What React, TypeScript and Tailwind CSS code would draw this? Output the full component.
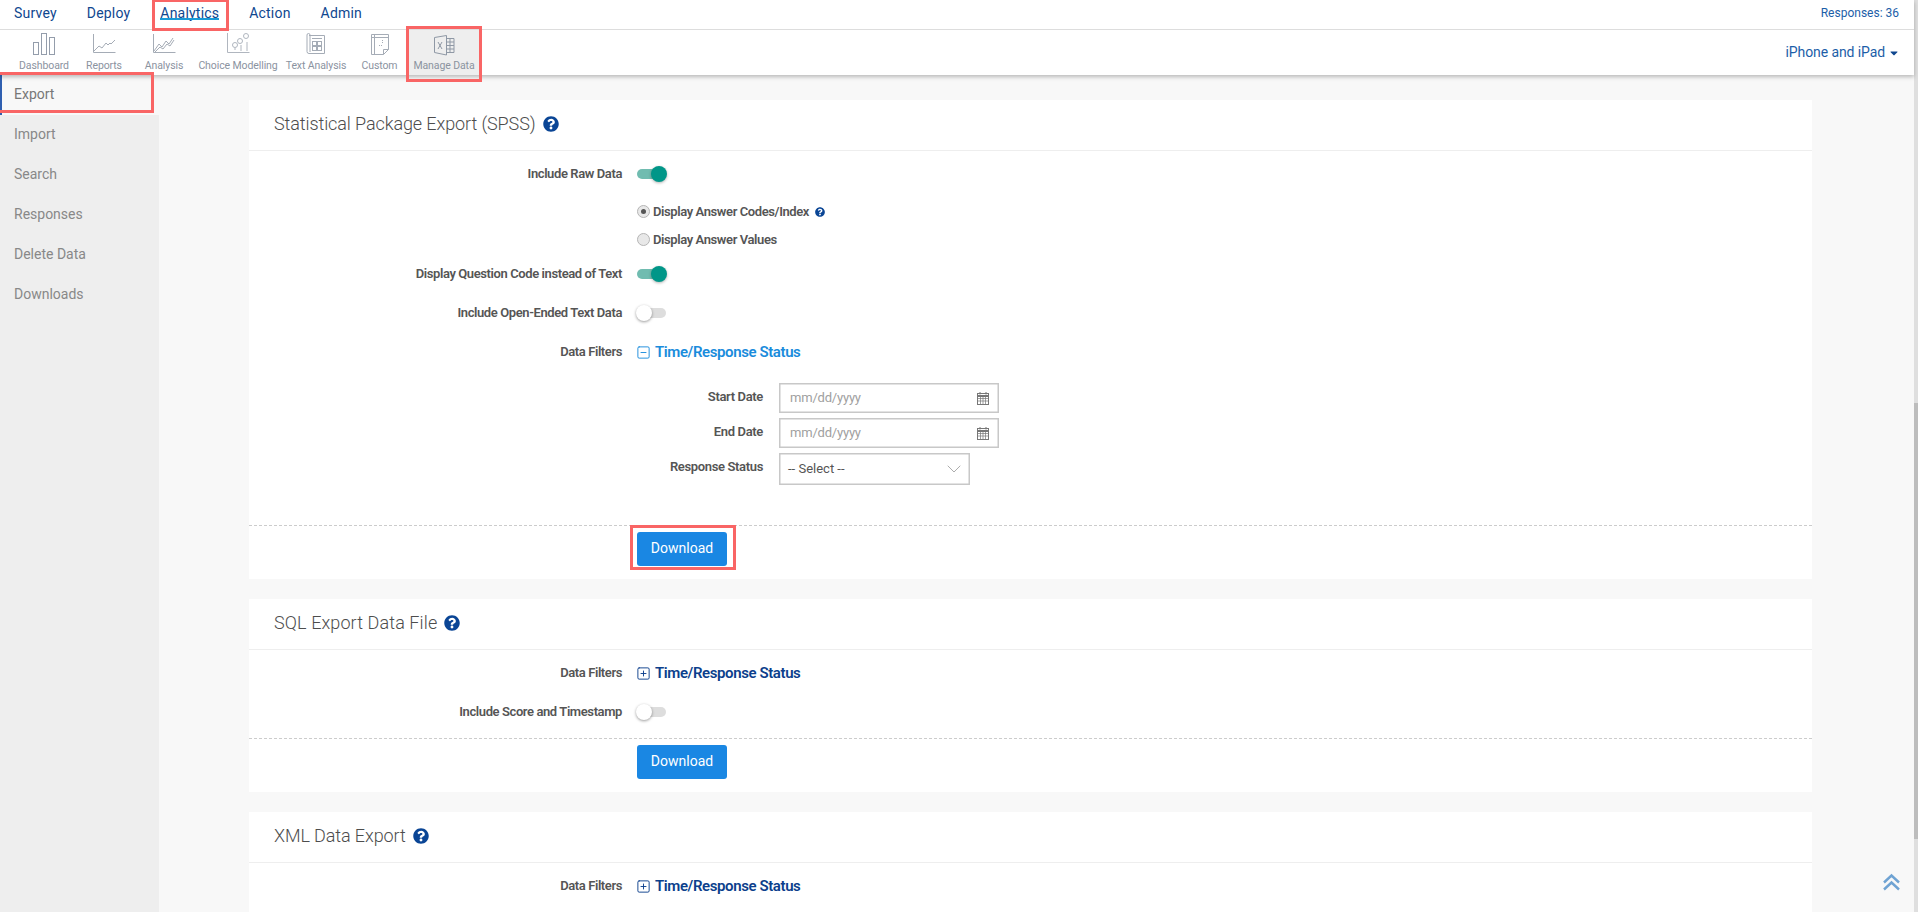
import { useState } from "react";
import { ChevronDown, SquareMinus, SquarePlus } from "lucide-react";
import { FaQuestionCircle, FaCaretDown } from "react-icons/fa";

const font = { fontFamily: '"Roboto", "Liberation Sans", sans-serif' };

const topMenu = ["Survey", "Deploy", "Analytics", "Action", "Admin"];
const sideMenu = ["Import", "Search", "Responses", "Delete Data", "Downloads"];

function IconDashboard() {
  return (
    <svg width="24" height="23" viewBox="0 0 24 23" fill="none" stroke="#949dab" strokeWidth="1">
      <rect x="1.5" y="9.5" width="5" height="12" />
      <rect x="9.5" y="0.5" width="5" height="21" />
      <rect x="17.5" y="4.5" width="5" height="17" />
    </svg>
  );
}

function IconReports() {
  return (
    <svg width="24" height="23" viewBox="0 0 24 23" fill="none" stroke="#a5acb6" strokeWidth="1">
      <path d="M1.5 1v18.5h22" />
      <path d="M2 18l5-5 3 2 4-5 2 2 2-2 1 1 4-4" />
    </svg>
  );
}

function IconAnalysis() {
  return (
    <svg width="24" height="23" viewBox="0 0 24 23" fill="none" stroke="#a5acb6" strokeWidth="1">
      <path d="M1.5 1v18.5h22" />
      <path d="M2 18l5-7 3 3 4-6 3 3 4-6" />
      <path d="M3 19l5-5 3 2 4-5 3 2 4-6" />
    </svg>
  );
}

function IconChoice() {
  return (
    <svg width="24" height="23" viewBox="0 0 24 23" fill="none" stroke="#b0b6bf" strokeWidth="1">
      <path d="M1.5 0v19.5h22" />
      <circle cx="9" cy="12" r="2.5" />
      <circle cx="14" cy="8" r="2.5" />
      <circle cx="20" cy="3" r="2.5" />
      <path d="M9 15v2M15 12v6M21 9v9" />
    </svg>
  );
}

function IconText() {
  return (
    <svg width="20" height="23" viewBox="0 0 20 23" fill="none" stroke="#a5acb6" strokeWidth="1">
      <path d="M3 2.5h15.5v18H3a2 2 0 0 1-2-2V2a1.5 1.5 0 0 1 3 0v17" />
      <rect x="6.5" y="8.5" width="4" height="4" />
      <rect x="11.5" y="8.5" width="4" height="4" />
      <rect x="6.5" y="13.5" width="4" height="4" />
      <rect x="11.5" y="13.5" width="4" height="4" />
      <path d="M6 5.5h10" />
    </svg>
  );
}

function IconCustom() {
  return (
    <svg width="20" height="23" viewBox="0 0 20 23" fill="none" stroke="#a5acb6" strokeWidth="1">
      <path d="M1.5 1.5h17v15l-5 5h-12z" />
      <path d="M13.5 21.5v-5h5" />
      <path d="M1.5 4.5h17M4.5 1.5v20" />
      <path d="M9 12.5h3M12.5 7v4" strokeDasharray="1 1" />
    </svg>
  );
}

function IconManage() {
  return (
    <svg width="22" height="22" viewBox="0 0 22 22" fill="none" stroke="#8f98a5" strokeWidth="1">
      <path d="M13.5 1.5l-12 2v15l12 2.5z" />
      <path d="M13.5 4.5h7.5v14h-7.5M13.5 8h7.5M13.5 11.5h7.5M13.5 15h7.5M17 4.5v14" />
      <path d="M5 8l4 7M9 8l-4 7" />
    </svg>
  );
}

function IconCalendar() {
  return (
    <svg width="12" height="13" viewBox="0 0 12 13" fill="none" stroke="#777777" strokeWidth="1">
      <rect x="0.5" y="1.5" width="11" height="11" />
      <path d="M0.5 4h11" strokeWidth="2" />
      <path d="M0.5 6.5h11M0.5 9h11M3.5 4v8M6 4v8M8.5 4v8" strokeWidth="0.7" />
      <path d="M3 0v2.5M9 0v2.5" />
    </svg>
  );
}

const subMenu = [
  { label: "Dashboard", icon: <IconDashboard />, w: "w-[60px]" },
  { label: "Reports", icon: <IconReports />, w: "w-[60px]" },
  { label: "Analysis", icon: <IconAnalysis />, w: "w-[60px]" },
  { label: "Choice Modelling", icon: <IconChoice />, w: "w-[88px]" },
  { label: "Text Analysis", icon: <IconText />, w: "w-[68px]" },
  { label: "Custom", icon: <IconCustom />, w: "w-[59px]" },
  { label: "Manage Data", icon: <IconManage />, w: "w-[70px]", active: true },
];

function Help({ size = 16 }: { size?: number }) {
  return <FaQuestionCircle size={size} className="text-[#0a4595] shrink-0" />;
}

function Toggle({ on }: { on?: boolean }) {
  return (
    <div className="relative w-[30px] h-[16px] flex items-center">
      <div className={`w-[29px] h-[10px] rounded-full ${on ? "bg-[#70bcb0]" : "bg-[#dddddd]"}`} />
      <div
        className={
          on
            ? "absolute right-0 top-0 w-4 h-4 rounded-full bg-[#009688] shadow-[0_1px_3px_rgba(0,0,0,0.3)]"
            : "absolute -left-[1px] top-0 w-4 h-4 rounded-full bg-white shadow-[0_1px_3px_rgba(0,0,0,0.4)]"
        }
      />
    </div>
  );
}

function Radio({ on }: { on?: boolean }) {
  return (
    <div className="w-[13px] h-[13px] rounded-full border border-[#b5b5b5] bg-[#e8e8e8] flex items-center justify-center -mt-[2px]">
      {on && <div className="w-[5px] h-[5px] rounded-full bg-[#555555]" />}
    </div>
  );
}

function Row({ label, className, children }: { label?: string; className?: string; children: React.ReactNode }) {
  return (
    <div className={`flex items-center h-6 ${className ?? ""}`}>
      <div className="w-[373px] text-right text-[13px] font-semibold text-[#555555] tracking-[-0.4px]">{label}</div>
      <div className="ml-[15px] flex items-center">{children}</div>
    </div>
  );
}

function FilterLink({ open }: { open?: boolean }) {
  const cls = open ? "text-[#1a8cdc]" : "text-[#0c3f8c]";
  return (
    <div className={`flex items-center ${cls}`}>
      <span className="-ml-[1px]">
        {open ? <SquareMinus size={15} strokeWidth={1.5} /> : <SquarePlus size={15} strokeWidth={1.5} />}
      </span>
      <span className="ml-[4px] text-[15px] font-semibold tracking-[-0.4px]">Time/Response Status</span>
    </div>
  );
}

function Card({ title, titleClass, children, className }: { title: string; titleClass?: string; children: React.ReactNode; className?: string }) {
  return (
    <div className={`bg-white ${className ?? ""}`}>
      <div className="h-[51px] border-b border-[#eeeeee] pl-[25px] pb-[3px] flex items-center gap-[7px]">
        <span className={`text-[18px] font-light text-[#4d4d4d] ${titleClass ?? "tracking-[-0.1px]"}`}>{title}</span>
        <Help />
      </div>
      {children}
    </div>
  );
}

function DownloadButton({ highlight }: { highlight?: boolean }) {
  return (
    <div className="ml-[388px] relative w-[90px]">
      <button className="w-[90px] h-[34px] pb-[2px] bg-[#1a87e3] text-white text-[14px] rounded-[3px]">Download</button>
      {highlight && <div className="absolute -left-[7px] -top-[7px] w-[106px] h-[45px] border-[3px] border-[#f96565]" />}
    </div>
  );
}

function DateRow({ label, className }: { label: string; className?: string }) {
  return (
    <div className={`flex items-center ${className ?? ""}`}>
      <div className="w-[514px] text-right text-[13px] font-semibold text-[#555555] -mt-[3px] tracking-[-0.35px]">{label}</div>
      <div className="ml-4 w-[220px] h-[30px] border border-[#c8c8c8] shadow-[inset_0_0_0_0.5px_#c8c8c8] flex items-center pl-[10px] pr-[9px] justify-between">
        <span className="text-[13px] text-[#a0a0a0] tracking-[-0.2px]">mm/dd/yyyy</span>
        <IconCalendar />
      </div>
    </div>
  );
}

export default function App() {
  const [page] = useState("Export");

  return (
    <div className="w-full h-[912px] overflow-hidden flex bg-[#f8f8f8]" style={font}>
      <div className="flex-1 min-w-0 flex flex-col">
        {/* header */}
        <div className="relative z-10 h-[75px] bg-white shadow-[0_2px_4px_rgba(0,0,0,0.25)]">
          <div className="h-[30px] border-b border-[#dddddd] flex items-start pl-[14px] pr-[15px]">
            <div className="flex gap-[30px]">
              {topMenu.map((m) => (
                <div key={m} className="relative text-[14px] text-[#0f478f] h-[26px] leading-[26px] tracking-[0.2px]">
                  <span>{m}</span>
                  {m === "Analytics" && (
                    <>
                      <div className="absolute left-0 right-0 top-[18px] h-[2px] bg-[#1a9ad6]" />
                      <div className="absolute -left-[8px] -right-[10px] -top-[1px] h-[32px] border-[3px] border-[#f96565]" />
                    </>
                  )}
                </div>
              ))}
            </div>
            <div className="ml-auto text-[12px] leading-[26px] text-[#1c5ea8]">Responses: 36</div>
          </div>
          <div className="h-[45px] flex items-stretch pl-[14px] pr-[14px]">
            {subMenu.map((s) => (
              <div
                key={s.label}
                className={`relative flex flex-col items-center pt-[3px] ${s.w} ${s.active ? "bg-[#eeeeee]" : ""}`}
              >
                <div className="h-[23px] flex items-center justify-center">{s.icon}</div>
                <div className="mt-[3px] text-[10.5px] leading-[13px] text-[#8b939f] whitespace-nowrap tracking-[-0.1px]">{s.label}</div>
                {s.active && <div className="absolute -left-[3px] -right-[3px] -top-[4px] h-[56px] border-[3px] border-[#f96565]" />}
              </div>
            ))}
            <div className="ml-auto flex items-center gap-[3px] text-[14px] text-[#1c5ea8] tracking-[-0.1px]">
              iPhone and iPad
              <FaCaretDown size={12} className="text-[#0f478f]" />
            </div>
          </div>
        </div>

        <div className="flex-1 min-h-0 flex">
          {/* sidebar */}
          <div className="w-[159px] shrink-0 flex flex-col">
            <div className="relative h-[40px] border-l-2 border-[#2f5fb0] pl-3 pb-[2px] flex items-center text-[14px] text-[#777777]">
              {page}
              <div className="absolute z-20 -left-[2px] -top-[3px] w-[154px] h-[41px] border-[3px] border-[#f96565] border-l-0" />
            </div>
            <div className="flex-1 bg-[#eeeeee]">
              {sideMenu.map((m) => (
                <div key={m} className="h-[40px] pl-[14px] pb-[2px] flex items-center text-[14px] text-[#888888]">
                  {m}
                </div>
              ))}
            </div>
          </div>

          {/* main */}
          <div className="relative flex-1 min-w-0 pl-[90px] pr-[102px] pt-[25px] overflow-hidden">
            <Card title="Statistical Package Export (SPSS)">
              <Row label="Include Raw Data" className="mt-[11px]"><Toggle on /></Row>
              <div className="mt-3 ml-[388px]">
                <div className="h-7 flex items-center gap-[3px] text-[13px] font-semibold text-[#555555] tracking-[-0.4px]">
                  <Radio on />
                  <span>Display Answer Codes/Index</span>
                  <span className="ml-[3px]"><Help size={10} /></span>
                </div>
                <div className="h-7 flex items-center gap-[3px] text-[13px] font-semibold text-[#555555] tracking-[-0.4px]">
                  <Radio />
                  <span>Display Answer Values</span>
                </div>
              </div>
              <Row label="Display Question Code instead of Text" className="mt-2"><Toggle on /></Row>
              <Row label="Include Open-Ended Text Data" className="mt-[15px]"><Toggle /></Row>
              <Row label="Data Filters" className="mt-[15px]"><FilterLink open /></Row>
              <DateRow label="Start Date" className="mt-[19px]" />
              <DateRow label="End Date" className="mt-[5px]" />
              <div className="flex items-center mt-[5px]">
                <div className="w-[514px] text-right text-[13px] font-semibold text-[#555555] -mt-[5px] tracking-[-0.35px]">Response Status</div>
                <div className="ml-4 w-[191px] h-[32px] border border-[#c8c8c8] shadow-[inset_0_0_0_0.5px_#c8c8c8] flex items-center justify-between pl-2 pr-[3px]">
                  <span className="text-[13px] text-[#555555]">-- Select --</span>
                  <ChevronDown size={24} strokeWidth={0.7} className="text-[#888888]" />
                </div>
              </div>
              <div className="mt-[40px] border-t border-dashed border-[#cccccc]" />
              <div className="mt-[6px] pb-[13px]"><DownloadButton highlight /></div>
            </Card>

            <Card title="SQL Export Data File" titleClass="tracking-[0.1px]" className="mt-5">
              <Row label="Data Filters" className="mt-[11px]"><FilterLink /></Row>
              <Row label="Include Score and Timestamp" className="mt-[15px]"><Toggle /></Row>
              <div className="mt-[14px] border-t border-dashed border-[#cccccc]" />
              <div className="mt-[6px] pb-[13px]"><DownloadButton /></div>
            </Card>

            <Card title="XML Data Export" className="mt-5 pb-[100px]">
              <Row label="Data Filters" className="mt-[11px]"><FilterLink /></Row>
            </Card>

            <svg width="17" height="18" viewBox="0 0 17 18" fill="none" stroke="#6fa3d3" strokeWidth="2.4" className="absolute right-[14px] top-[798px]">
              <path d="M1 9.5L8.5 2.5L16 9.5" />
              <path d="M1 16.5L8.5 9.5L16 16.5" />
            </svg>
          </div>
        </div>
      </div>

      {/* page scrollbar */}
      <div className="w-1 shrink-0 bg-[#dfdfdf] flex flex-col">
        <div className="h-[403px]" />
        <div className="h-[436px] bg-[#bdbdbd]" />
      </div>
    </div>
  );
}
